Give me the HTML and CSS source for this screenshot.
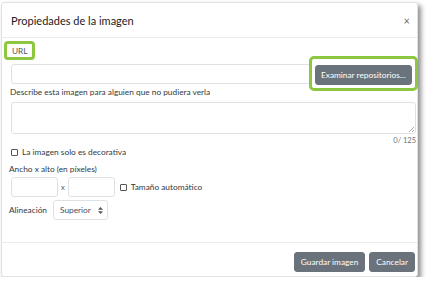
FILE: index.html
```html
<!DOCTYPE html>
<html lang="es">
<head>
<meta charset="utf-8">
<link rel="stylesheet" href="styles.css">
</head>
<body>
<div class="modal">
  <div class="modal-header">
    <h5 class="title">Propiedades de la imagen</h5>
    <span class="close">×</span>
  </div>
  <div class="modal-body">
    <div class="url-label"><span>URL</span></div>
    <div class="url-row">
      <input class="input url-input" type="text">
      <div class="btn-hl"><button class="btn">Examinar repositorios...</button></div>
    </div>
    <div class="label desc">Describe esta imagen para alguien que no pudiera verla</div>
    <div class="textarea"><svg class="grip" width="6" height="6" viewBox="0 0 6 6"><path d="M1 6L6 1M4 6L6 4" stroke="#999" stroke-width="0.8"/></svg></div>
    <div class="counter">0/ 125</div>
    <label class="check"><span class="box"></span>La imagen solo es decorativa</label>
    <div class="label size-label">Ancho x alto (en píxeles)</div>
    <div class="size-row">
      <input class="input small" type="text">
      <span class="x">x</span>
      <input class="input small" type="text">
      <label class="check inline"><span class="box"></span>Tamaño automático</label>
    </div>
    <div class="align-row">
      <span class="label">Alineación</span>
      <div class="select">Superior <svg class="arrows" width="5" height="7" viewBox="0 0 5 7"><path d="M2.5 0L5 2.8H0Z M2.5 7L5 4.2H0Z" fill="#555"/></svg></div>
    </div>
  </div>
  <div class="modal-footer">
    <button class="btn">Guardar imagen</button>
    <button class="btn">Cancelar</button>
  </div>
</div>
</body>
</html>
```
FILE: styles.css
```css
* { box-sizing: border-box; }
body {
  margin: 0;
  background: #fff;
  font-family: Lato, "Open Sans", sans-serif;
  color: #343a40;
}
.modal {
  width: 417px;
  height: 275px;
  margin: 2px 0 0 1px;
  border: 1px solid #e3e3e3;
  border-radius: 3px;
  background: #fff;
  box-shadow: 3px 3px 5px rgba(0,0,0,0.45);
  display: flex;
  flex-direction: column;
}
.modal-header {
  height: 35px;
  flex-shrink: 0;
  padding: 1px 7px 0 9px;
  border-bottom: 1px solid #e9ecef;
  display: flex;
  align-items: center;
  justify-content: space-between;
}
.title {
  margin: 0;
  font-size: 11px;
  font-weight: 400;
  color: #1d2125;
}
.close {
  font-size: 11px;
  color: #6a6a6a;
}
.modal-body {
  flex: 1;
  padding: 3px 2px 0 9px;
}
.url-label {
  margin-left: -7px;
  display: flex;
  width: fit-content;
  align-items: center;
  height: 19px;
  padding: 0 4px 0 5px;
  border: 3px solid #8dc63f;
  border-radius: 4px;
  font-size: 8.3px;
  color: #555;
}
.url-row {
  display: flex;
  align-items: center;
  margin-top: -4px;
  margin-bottom: -5px;
}
.input {
  border: 1px solid #dee2e6;
  border-radius: 3px;
  height: 20px;
  background: #fff;
  padding: 0;
  margin: 0;
  flex-shrink: 0;
}
.url-input {
  width: 301px;
}
.btn-hl {
  flex-shrink: 0;
  margin-left: -3px;
  border: 3px solid #8dc63f;
  border-radius: 5px;
  padding: 3px;
}
.btn {
  font-family: inherit;
  white-space: nowrap;
  background: #6a737b;
  color: #fff;
  border: 1px solid #6a737b;
  border-radius: 3px;
  font-size: 8.3px;
  height: 20px;
  padding: 0 5px;
}
.label {
  font-size: 8.3px;
  line-height: 12px;
  color: #343a40;
}
.desc {
  margin-left: -1px;
}
.textarea {
  position: relative;
  margin-top: 4px;
  width: 405px;
  height: 32px;
  border: 1px solid #dee2e6;
  border-radius: 3px;
}
.grip {
  position: absolute;
  right: 1px;
  bottom: 1px;
}
.counter {
  text-align: right;
  font-size: 7.5px;
  line-height: 10px;
  color: #6a737b;
  margin-top: 2px;
  width: 405px;
}
.check {
  display: flex;
  align-items: center;
  font-size: 8.3px;
  line-height: 12px;
  color: #343a40;
}
.box {
  width: 7px;
  height: 7px;
  border: 1px solid #555;
  border-radius: 1px;
  margin-right: 4px;
}
.size-label {
  margin-top: 5px;
  margin-left: -2px;
}
.size-row {
  display: flex;
  align-items: center;
  margin-top: 2px;
}
.small {
  width: 47px;
}
.x {
  font-size: 7.5px;
  color: #555;
  margin: 0 3px 0 3px;
}
.check.inline {
  margin: 0 0 0 5px;
}
.align-row {
  display: flex;
  align-items: center;
  margin-top: 3px;
  margin-left: -2px;
}
.select {
  margin-left: 6px;
  height: 20px;
  width: 55px;
  border: 1px solid #dee2e6;
  border-radius: 3px;
  display: flex;
  align-items: center;
  padding-left: 6px;
  font-size: 8.3px;
  color: #495057;
}
.arrows {
  margin-left: 7px;
}
.modal-footer {
  height: 34px;
  flex-shrink: 0;
  border-top: 1px solid #e9ecef;
  display: flex;
  justify-content: flex-end;
  align-items: flex-start;
  gap: 4px;
  padding: 9px 2px 0 9px;
}
.modal-footer .btn {
  padding: 0 6px;
}
```
